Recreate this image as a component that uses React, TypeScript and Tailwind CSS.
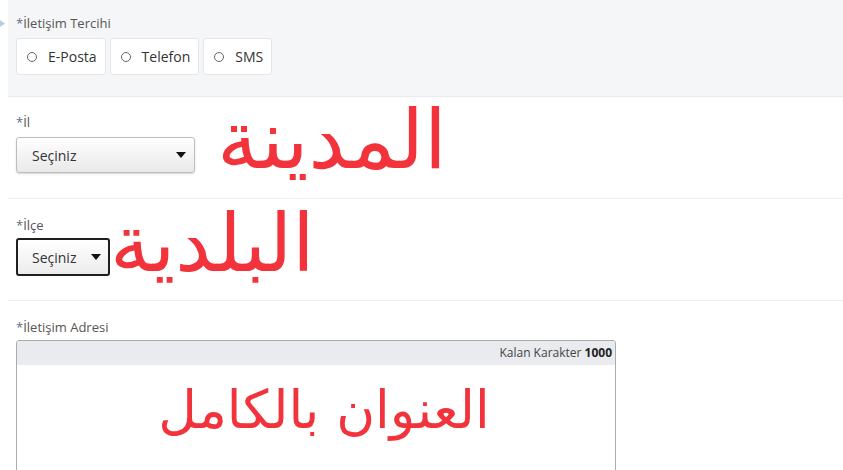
import React from 'react';

const Caret: React.FC = () => (
  <svg width="10" height="6" viewBox="0 0 10 6" className="shrink-0">
    <path d="M0 0 L10 0 L5 6 Z" fill="#111" />
  </svg>
);

const Label: React.FC<{ text: string }> = ({ text }) => (
  <div className="text-[13px] leading-4 text-[#555]">
    <span className="text-[#5b6f86]">*</span>
    {text}
  </div>
);

const arabic = { fontFamily: '"DejaVu Sans", sans-serif' };

const App: React.FC = () => {
  const options = ['E-Posta', 'Telefon', 'SMS'];

  return (
    <div className="flex h-[470px] w-[843px] overflow-hidden bg-white font-['Open_Sans',sans-serif]">
      {/* left gutter with the small chevron */}
      <div className="w-2 shrink-0 pt-[20px]">
        <svg width="5" height="7" viewBox="0 0 5 7">
          <path d="M0 0 L5 3.5 L0 7 Z" fill="#b9cde0" />
        </svg>
      </div>

      <div className="flex flex-1 flex-col">
        {/* İletişim Tercihi */}
        <section className="h-[97px] shrink-0 border-b border-[#e8eaed] bg-[#f5f6f8] px-2 pt-[15px]">
          <Label text="İletişim Tercihi" />
          <div className="mt-[7px] flex gap-1">
            {options.map((o) => (
              <div
                key={o}
                className="flex h-[37px] items-center gap-[11px] rounded-[3px] border border-[#e3e5e8] bg-white pl-[10px] pr-[8px] text-[14px] text-[#333]"
              >
                <span className="h-[10px] w-[10px] rounded-full border border-[#666]" />
                <span>{o}</span>
              </div>
            ))}
          </div>
        </section>

        {/* İl */}
        <section className="flex h-[102px] shrink-0 items-start border-b border-[#eceef0] px-2">
          <div className="pt-[17px]">
            <Label text="İl" />
            <div className="mt-[7px] flex h-[36px] w-[179px] items-center justify-between rounded-[3px] border border-[#bdbdbd] bg-gradient-to-b from-white to-[#e9e9e9] pl-[15px] pr-[8px] text-[14px] text-[#333] shadow-[0_1px_2px_rgba(0,0,0,0.15)]">
              <span>Seçiniz</span>
              <Caret />
            </div>
          </div>
          <div
            className="ml-[22px] mt-[2px] text-[82px] leading-none text-[#f2333b]"
            style={arabic}
            dir="rtl"
          >
            المدينة
          </div>
        </section>

        {/* İlçe */}
        <section className="flex h-[102px] shrink-0 items-start border-b border-[#eceef0] px-2">
          <div className="pt-[18px]">
            <Label text="İlçe" />
            <div className="mt-[5px] flex h-[38px] w-[94px] items-center justify-between rounded-[3px] border-2 border-[#1f1f1f] bg-gradient-to-b from-white to-[#ececec] pl-[14px] pr-[7px] text-[14px] text-[#333]">
              <span>Seçiniz</span>
              <Caret />
            </div>
          </div>
          <div
            className="mt-[5px] text-[80px] leading-none text-[#f2333b]"
            style={arabic}
            dir="rtl"
          >
            البلدية
          </div>
        </section>

        {/* İletişim Adresi */}
        <section className="shrink-0 px-2 pt-[18px]">
          <Label text="İletişim Adresi" />
          <div className="mt-[5px] w-[600px] overflow-hidden rounded-t-[3px] border border-[#a9abae]">
            <div className="flex h-[24px] items-center justify-end bg-[#e9ebee] pr-[3px] text-[12px] text-[#444]">
              Kalan Karakter&nbsp;<b className="text-[#222]">1000</b>
            </div>
            <div className="flex h-[120px] justify-center bg-white pl-[16px] pt-[18px]">
              <div
                className="text-[53px] leading-none text-[#f2333b]"
                style={arabic}
                dir="rtl"
              >
                العنوان بالكامل
              </div>
            </div>
          </div>
        </section>
      </div>
    </div>
  );
};

export default App;
